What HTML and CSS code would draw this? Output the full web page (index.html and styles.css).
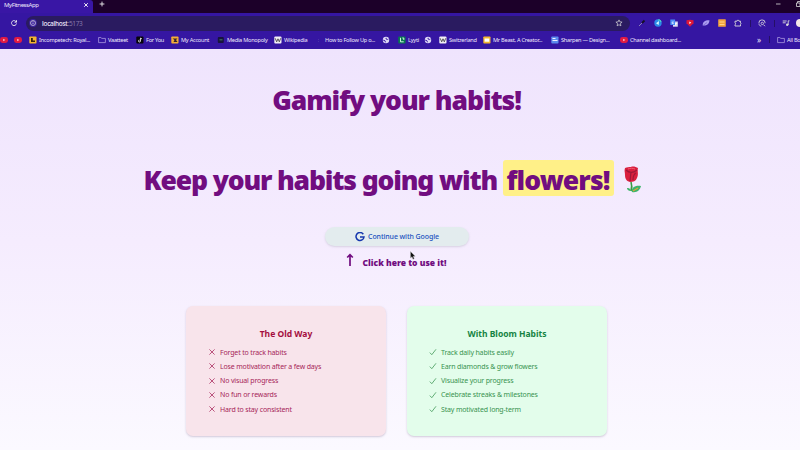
FILE: index.html
```html
<!DOCTYPE html>
<html lang="en">
<head>
<meta charset="utf-8">
<title>MyFitnessApp</title>
<link rel="stylesheet" href="styles.css">
</head>
<body>
<svg width="0" height="0" class="defs">
  <symbol id="yt" viewBox="0 0 8 8"><rect y="1" width="8" height="6" rx="2.4" fill="#e01b43"/><path d="M3.2 2.8 5.3 4 3.2 5.2z" fill="#ffc4d0"/></symbol>
  <symbol id="folder" viewBox="0 0 8 8"><path d="M.6 1.5h2.3l.9.9h3.6v4.2H.6z" fill="none" stroke="#b9a9e8" stroke-width=".7"/></symbol>
  <symbol id="globe" viewBox="0 0 8 8"><circle cx="4" cy="4" r="3.2" fill="#dcd7f5"/><path d="M1.200 4.200 3 4.700l.5 1.600M4.200 1.800 4 3l1.700.5.8-.5" fill="none" stroke="#3515a0" stroke-width=".9"/></symbol>
  <symbol id="wiki" viewBox="0 0 8 8"><rect x=".3" y=".5" width="7.2" height="7" rx="1" fill="#f1eef5"/><path d="M1.2 2.3 2.7 5.8 4 2.8l1.3 3 1.4-3.5" fill="none" stroke="#333" stroke-width=".8"/></symbol>
  <symbol id="cross" viewBox="0 0 8 8"><path d="m1.4 1.4 5.2 5.2m0-5.2L1.4 6.6" fill="none" stroke="currentColor" stroke-width=".75"/></symbol>
  <symbol id="check" viewBox="0 0 8 8"><path d="m.8 4.6 2 2.1L7 1.3" fill="none" stroke="currentColor" stroke-width=".75"/></symbol>
</svg>
<header class="browser">
  <div class="tabs">
    <div class="tab"><span>MyFitnessApp</span><svg class="x" viewBox="0 0 6 6"><path d="m1.2 1.2 3.6 3.6m0-3.6L1.2 4.8" stroke="#fff" stroke-width=".9"/></svg></div>
    <svg class="plus" viewBox="0 0 6 6"><path d="M3 .6v4.8M.6 3h4.8" stroke="#eee" stroke-width=".9"/></svg>
    <svg class="window" viewBox="0 0 28 8"><path d="M1 4h4.5" stroke="#ddd" stroke-width=".8"/><path d="M21.500 3h3.500v3.500h-3.500zM22.500 3V1.500h4V5h-1.500" fill="none" stroke="#ddd" stroke-width=".8"/></svg>
  </div>
  <div class="toolbar">
    <svg class="reload" viewBox="0 0 8 8"><path d="M6.300 3A2.500 2.500 0 1 0 6.500 4.500M6.500 1.200v2h-2" fill="none" stroke="#eee" stroke-width=".9"/></svg>
    <div class="address">
      <svg class="info" viewBox="0 0 8 8"><circle cx="4" cy="4" r="3.900" fill="#3e24a0"/><circle cx="4" cy="4" r="2.500" fill="none" stroke="#ddd" stroke-width=".7"/><path d="M4 3.600v1.500M4 2.400v.6" stroke="#eee" stroke-width=".7"/></svg>
      <span class="host">localhost</span><span class="port">:5173</span>
      <svg class="star" viewBox="0 0 8 8"><path d="m4 .9.9 2 2.200.2-1.700 1.500.5 2.200L4 5.700 2.100 6.800l.5-2.200L.9 3.100l2.200-.2z" fill="none" stroke="#ddd" stroke-width=".7"/></svg>
    </div>
    <div class="tools">
      <svg viewBox="0 0 8 8"><path d="m1 7 3.500-3.500" stroke="#8b80b5"/><path d="m4 4 2.500-2.500" stroke="#161026" stroke-width="1.800"/></svg>
      <svg viewBox="0 0 8 8"><circle cx="4" cy="4" r="3.700" fill="#2c8be8"/><path d="M2 4.300 5 2l-.3 4z" fill="#d9f8ff"/><path d="M4 1h2l1 2" stroke="#53dfc1" fill="none"/></svg>
      <svg viewBox="0 0 8 8"><rect x="3" y="2.500" width="4.800" height="5.200" fill="#d7dcef"/><rect x=".3" y=".5" width="4.800" height="5.500" fill="#4b8df5"/><path d="M3.800 3H2.200v1.500h1.500M5.200 4.500h2M6 4l-.8 2.500" fill="none" stroke="#fff" stroke-width=".7"/></svg>
      <svg viewBox="0 0 8 8"><path d="M.5 1.200 4 .8l3.500.4v3L4 7.700.5 4.200z" fill="#df1737"/><path d="m3.300 2.600 2 1.200-2 1.200z" fill="#fff"/></svg>
      <svg viewBox="0 0 8 8"><path d="M.7 6.500C.5 2.500 3.500 1 7.500 1.300 7.300 5 4.500 7 .7 6.500z" fill="#a99aef"/><path d="m1 6.500 4-3" stroke="#6b50c8" stroke-width=".6"/></svg>
      <svg viewBox="0 0 8 8"><rect x=".2" y=".2" width="7.600" height="7.600" rx=".6" fill="#f2a33b"/><path d="M1.500 3h5M1.500 5.500h5" stroke="#ffd58c"/></svg>
      <svg viewBox="0 0 8 8"><path d="M1 2.200h2a1 1 0 0 1 2 0h1.500v1.600a.9.900 0 0 1 0 1.600V7H1V5.600a.9.900 0 0 0 0-1.700z" fill="none" stroke="#ddd" stroke-width=".9"/></svg>
      <i></i>
      <svg viewBox="0 0 8 8"><path d="M1 4.500V3.600A2.600 2.600 0 0 1 3.600 1h.8A2.600 2.600 0 0 1 7 3.600v.6M1 5.200C1.300 6.300 2 7 3.300 7M5.500 5.700 7 7.200" fill="none" stroke="#ddd" stroke-width=".9"/><circle cx="4.300" cy="4.400" r="1.200" fill="none" stroke="#ddd" stroke-width=".8"/></svg>
      <i></i>
      <svg viewBox="0 0 8 8"><path d="M.7 2h4M.7 3.800h3M6.200 6V1.800h1.300" fill="none" stroke="#ddd" stroke-width=".9"/><circle cx="5.200" cy="5.800" r="1.200" fill="#ddd"/></svg>
      <svg viewBox="0 0 8 8"><circle cx="4" cy="4" r="4" fill="#f4e8e8"/></svg>
    </div>
  </div>
  <nav class="bookmarks">
    <a><svg><use href="#yt"/></svg></a>
    <a><svg><use href="#yt"/></svg></a>
    <a><svg viewBox="0 0 8 8"><rect x=".3" y=".5" width="7.200" height="7" rx=".8" fill="#f3b52e"/><path d="M2 2v4h4V4.500H3.800V2z" fill="#35230c"/></svg><span>Incompetech: Royal...</span></a>
    <a><svg><use href="#folder"/></svg><span>Vaatteet</span></a>
    <a><svg viewBox="0 0 8 8"><rect x=".3" y=".5" width="7.200" height="7" rx="1" fill="#07050b"/><path d="M4.500 2v3A1 1 0 1 1 3.500 4M4.500 2l1.500 1" fill="none" stroke="#fff" stroke-width=".8"/></svg><span>For You</span></a>
    <a><svg viewBox="0 0 8 8"><rect x=".3" y=".5" width="7.200" height="7" rx=".8" fill="#f4ad35"/><path d="M1.500 2.500h5L5 4l1.500 2h-4L3.500 4z" fill="#34232c"/></svg><span>My Account</span></a>
    <a><svg viewBox="0 0 8 8"><rect x=".8" y="1" width="6" height="6" rx="1" fill="#18143e"/><path d="M2.500 3h3v1.500h-3z" fill="#355f55"/></svg><span>Media Monopoly</span></a>
    <a><svg><use href="#wiki"/></svg><span>Wikipedia</span></a>
    <a><svg viewBox="0 0 8 8"><path d="M3.500 3v.8M3.500 5v.8" stroke="#5542a9" stroke-width=".8"/></svg><span>How to Follow Up o...</span></a>
    <a><svg><use href="#globe"/></svg></a>
    <a><svg viewBox="0 0 8 8"><rect x=".3" y=".5" width="7.200" height="7" rx=".8" fill="#08794f"/><path d="M2.500 1.800v4h3.200M4.300 2h1.500v2" fill="none" stroke="#e5fff0" stroke-width=".9"/></svg><span>Lyyti</span></a>
    <a><svg><use href="#globe"/></svg></a>
    <a><svg><use href="#wiki"/></svg><span>Switzerland</span></a>
    <a><svg viewBox="0 0 8 8"><rect x=".3" y=".5" width="7.200" height="7" rx=".8" fill="#f4b82e"/><rect x="1.600" y="2.500" width="4.700" height="3.200" fill="#fff"/></svg><span>Mr Beast, A Creator...</span></a>
    <a><svg viewBox="0 0 8 8"><rect x=".3" y=".5" width="7.200" height="7" rx=".8" fill="#5c8ced"/><path d="M1.500 2.500h3M1.500 4.500h5" stroke="#eef"/></svg><span>Sharpen — Design...</span></a>
    <a><svg><use href="#yt"/></svg><span>Channel dashboard...</span></a>
    <a class="more">»</a>
    <i></i>
    <a><svg><use href="#folder"/></svg><span>All Bookmarks</span></a>
  </nav>
</header>
<main>
  <h1>Gamify your habits!</h1>
  <h2><span class="lead">Keep your habits going with</span><mark>flowers!</mark>
    <svg class="rose" viewBox="0 0 20 28"><path d="M9 16c1 3 1 6 0 9" fill="none" stroke="#399b42" stroke-width="1.600"/><path d="M9 25c-3 0-4-2-4-3 2-.5 4 1 4 3zM10 26c-1-4 3-7 9-6-1 4-4 7-9 6z" fill="#3eb46a"/><path d="m11 25 5-3" stroke="#d9a83b" stroke-width="1.200"/><path d="M3 2c2-1 4-1 6-1 2-1 5 0 7 1-1 3 1 6-1 10-1 3-4 4-7 4-4-1-5-4-5-7 0-3-1-4 0-7z" fill="#d91f3e"/><path d="M4 4c3 3 7 3 11 0M9 6l-1 9M14 7c-2 1-3 4-3 7" fill="none" stroke="#9e1838" stroke-width="1.200"/><path d="M6 3c2-1 5-1 7 0" fill="none" stroke="#f45c72"/></svg>
  </h2>
  <button><svg class="google" viewBox="0 0 10 10"><path d="M8.300 2.200A4 4 0 1 0 9 5H5" fill="none" stroke="#1637ad" stroke-width="1.500"/></svg><span>Continue with Google</span></button>
  <div class="hint"><svg viewBox="0 0 8 14"><path d="M4 13V2M1.200 4.500 4 1.700l2.800 2.800" fill="none" stroke="#710d80" stroke-width="1.700"/></svg><span>Click here to use it!</span></div>
  <div class="cards">
    <section class="old">
      <h3>The Old Way</h3>
      <ul>
        <li><svg><use href="#cross"/></svg><span>Forget to track habits</span></li>
        <li><svg><use href="#cross"/></svg><span>Lose motivation after a few days</span></li>
        <li><svg><use href="#cross"/></svg><span>No visual progress</span></li>
        <li><svg><use href="#cross"/></svg><span>No fun or rewards</span></li>
        <li><svg><use href="#cross"/></svg><span>Hard to stay consistent</span></li>
      </ul>
    </section>
    <section class="bloom">
      <h3>With Bloom Habits</h3>
      <ul>
        <li><svg><use href="#check"/></svg><span>Track daily habits easily</span></li>
        <li><svg><use href="#check"/></svg><span>Earn diamonds &amp; grow flowers</span></li>
        <li><svg><use href="#check"/></svg><span>Visualize your progress</span></li>
        <li><svg><use href="#check"/></svg><span>Celebrate streaks &amp; milestones</span></li>
        <li><svg><use href="#check"/></svg><span>Stay motivated long-term</span></li>
      </ul>
    </section>
  </div>
</main>
<svg class="cursor" viewBox="0 0 6 9"><path d="M.5.500v6.500l1.500-1.300L3 8.300l1.200-.6L3.200 5.200h2z" fill="#111" stroke="#bbb" stroke-width=".4"/></svg>
</body>
</html>
```
FILE: styles.css
```css
* { box-sizing: border-box; }
body { margin: 0; width: 800px; height: 450px; overflow: hidden; font-family: "Noto Sans", "Open Sans", sans-serif; display: flex; flex-direction: column; }
svg { display: block; flex: none; }
.defs { position: absolute; }
.browser { height: 49px; flex: none; background: #3516a2; color: #eee9fc; font-size: 6px; }
.tabs { height: 13px; background: #1c0029; display: flex; align-items: flex-start; }
.tab { width: 93px; height: 13px; background: #3916a5; padding: 0 4px 4px; border-radius: 0 3px 0 0; display: flex; align-items: center; justify-content: space-between; letter-spacing: -.4px; }
.x { width: 6px; height: 6px; }
.plus { width: 6px; height: 6px; margin: 1px 0 0 6px; }
.window { width: 28px; height: 8px; margin: 0 -3px 0 auto; }
.toolbar { height: 20px; display: flex; align-items: center; }
.reload { width: 8px; height: 8px; margin: 0 8px 0 10px; }
.address { width: 604px; height: 15px; flex: none; border-radius: 8px; background: #2a1b60; display: flex; align-items: center; padding: 0 7px 0 3px; font-size: 6.500px; letter-spacing: -.35px; }
.info { width: 8px; height: 8px; margin-right: 5px; }
.host { font-weight: 500; letter-spacing: -.28px; }
.port { color: #8879aa; }
.star { width: 8px; height: 8px; margin-left: auto; }
.tools { margin-left: 4px; flex: none; display: grid; grid-template-columns: repeat(7, 16px) 8px 16px 8px 16px 12px; justify-items: center; align-items: center; }
.tools svg { width: 8px; height: 8px; }
.tools i, .bookmarks i { width: 1px; height: 7px; background: #251065; }
.bookmarks { height: 13px; overflow: hidden; display: grid; grid-template-columns: 14px 15px 69px 38px 35px 46px 57px 41px 67px 16px 26px 15px 44px 68px 69px 137px 12px 8px 60px; align-items: center; font-size: 5.600px; letter-spacing: -.25px; white-space: nowrap; }
.bookmarks a { display: flex; align-items: center; gap: 2px; }
.bookmarks svg { width: 8px; height: 8px; }
.bookmarks .more { font-size: 8px; line-height: 8px; }
main { flex: 1; background: linear-gradient(#efe4fd, #f5ecfe 48%, #fbf9ff); display: flex; flex-direction: column; align-items: center; color: #710d80; }
h1, h2, h3, ul { margin: 0; padding: 0; }
h1, h2 { font-size: 26.500px; font-weight: 900; line-height: 36px; letter-spacing: -1.060px; white-space: nowrap; }
h1 { margin-top: 33px; margin-left: -7px; }
h2 { width: 513px; height: 36px; margin: 42px 0 0; display: flex; align-items: center; }
h2 .lead { width: 359px; letter-spacing: -1.150px; height: 36px; line-height: 40px; }
mark { background: #fff088; color: inherit; width: 111px; height: 36px; line-height: 40px; border-radius: 3px; padding-left: 4px; letter-spacing: -.9px; }
.rose { width: 20px; height: 28px; margin: 3px 0 0 8px; }
button { width: 144px; height: 19px; margin: 31px 0 0 -6px; border: 0; border-radius: 10px; background: #e3ecee; box-shadow: 0 1px 2px #bbb7c980; display: flex; align-items: center; justify-content: center; gap: 3px; font: 500 7px "Noto Sans", sans-serif; letter-spacing: -.09px; color: #2151be; }
.google { width: 10px; height: 10px; }
.hint { height: 20px; margin: 7px 0 0 -8px; display: flex; gap: 9px; font-size: 8.500px; font-weight: 900; line-height: 20px; }
.hint svg { width: 8px; height: 14px; }
.cards { display: grid; grid-template-columns: 200px 200px; gap: 21px; margin: 33px 0 0 -7px; }
section { height: 130px; border-radius: 7px; box-shadow: 0 1px 2px #a99bb680; }
.old { background: #f8e4eb; color: #a72459; }
.bloom { background: #e3fdeb; color: #389350; }
h3 { padding-top: 21px; text-align: center; font-size: 8.500px; line-height: 14px; }
.old h3 { color: #a50e40; }
.bloom h3 { color: #168343; }
ul { list-style: none; padding: 4px 0 0 22px; font-size: 7px; letter-spacing: -.16px; }
li { height: 14.250px; display: flex; align-items: center; gap: 4px; }
li svg { width: 8px; height: 8px; }
.cursor { position: absolute; left: 410px; top: 251px; width: 6px; height: 9px; }
```
